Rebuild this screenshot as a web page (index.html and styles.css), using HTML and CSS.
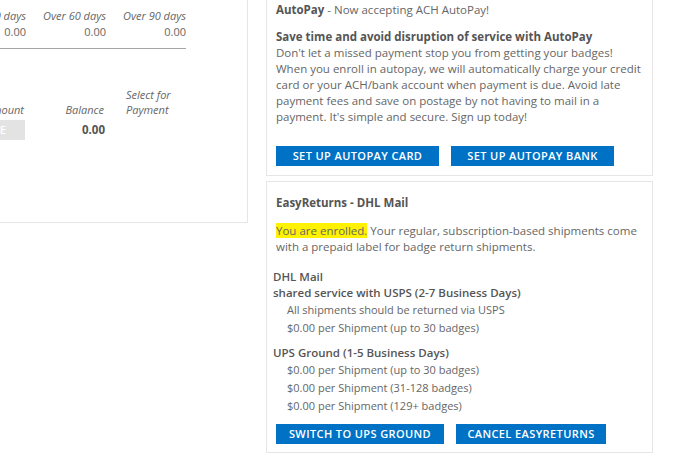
FILE: index.html
```html
<!DOCTYPE html>
<html lang="en">
<head>
<meta charset="utf-8">
<title>Billing</title>
<link rel="stylesheet" href="styles.css">
</head>
<body>
<div class="page">
  <div class="left-panel">
    <div class="aging">
      <div class="hd">Current</div>
      <div class="hd">Over 30 days</div>
      <div class="hd">Over 60 days</div>
      <div class="hd">Over 90 days</div>
      <div class="val">0.00</div>
      <div class="val">0.00</div>
      <div class="val">0.00</div>
      <div class="val">0.00</div>
    </div>
    <div class="invoices">
      <div class="hd">Amount</div>
      <div class="hd">Balance</div>
      <div class="hd sel">Select for<br>Payment</div>
      <div class="cell"><span class="btn-disabled">PAY ONLINE</span></div>
      <div class="cell bal">0.00</div>
      <div class="cell sel"></div>
    </div>
  </div>

  <div class="right-col">
    <section class="card card-autopay">
      <p class="lead"><b>AutoPay</b> - Now accepting ACH AutoPay!</p>
      <h4 class="card-sub">Save time and avoid disruption of service with AutoPay</h4>
      <p class="body">Don't let a missed payment stop you from getting your badges!<br>When you enroll in autopay, we will automatically charge your credit<br>card or your ACH/bank account when payment is due. Avoid late<br>payment fees and save on postage by not having to mail in a<br>payment. It's simple and secure. Sign up today!</p>
      <div class="btn-row btn-row-autopay">
        <button class="btn btn-autopay">Set up AutoPay Card</button>
        <button class="btn btn-autopay">Set up AutoPay Bank</button>
      </div>
    </section>

    <section class="card card-returns">
      <h4 class="card-title">EasyReturns - DHL Mail</h4>
      <p class="body"><mark class="hl">You are enrolled.</mark> Your regular, subscription-based shipments come<br>with a prepaid label for badge return shipments.</p>
      <div class="carrier">
        <div class="carrier-name">DHL Mail<br>shared service with USPS (2-7 Business Days)</div>
        <ul class="rates">
          <li>All shipments should be returned via USPS</li>
          <li>$0.00 per Shipment (up to 30 badges)</li>
        </ul>
      </div>
      <div class="carrier carrier-ups">
        <div class="carrier-name">UPS Ground (1-5 Business Days)</div>
        <ul class="rates">
          <li>$0.00 per Shipment (up to 30 badges)</li>
          <li>$0.00 per Shipment (31-128 badges)</li>
          <li>$0.00 per Shipment (129+ badges)</li>
        </ul>
      </div>
      <div class="btn-row btn-row-returns">
        <button class="btn btn-switch">Switch to UPS Ground</button>
        <button class="btn btn-cancel">Cancel EasyReturns</button>
      </div>
    </section>
  </div>
</div>
</body>
</html>
```

FILE: styles.css
```css
* { box-sizing: border-box; }

body {
  margin: 0;
  font-family: "Open Sans", "Segoe UI", sans-serif;
  font-size: 11.5px;
  line-height: 16px;
  color: #666;
  background: #fff;
  overflow: hidden;
}

.page {
  display: flex;
  align-items: flex-start;
  gap: 18px;
  margin: -10px 0 0 -300px;
}

/* left panel */
.left-panel {
  width: 548px;
  height: 233px;
  border: 1px solid #e6e6e6;
  padding: 17px 61px 0 16px;
  display: flex;
  flex-direction: column;
  align-items: flex-end;
}

.aging {
  display: grid;
  grid-template-columns: repeat(4, 80px);
  border-bottom: 1px solid #a6a6a6;
  padding-bottom: 8px;
}

.aging .hd,
.invoices .hd {
  font-style: italic;
  text-align: right;
  font-size: 11px;
}

.aging .val {
  text-align: right;
  font-size: 11px;
}

.invoices {
  margin-top: 38px;
  display: grid;
  grid-template-columns: 80px 80px 80px;
  align-items: end;
  row-gap: 3px;
}

.invoices .hd {
  line-height: 15px;
  padding-right: 2px;
}

.invoices .hd.sel {
  text-align: left;
  padding-left: 20px;
}

.invoices .cell {
  text-align: right;
  height: 20px;
  display: flex;
  align-items: center;
  justify-content: flex-end;
  padding-right: 1px;
}

.invoices .cell.bal {
  font-weight: 700;
  color: #555;
  font-size: 11.5px;
}

.btn-disabled {
  display: inline-block;
  height: 20px;
  line-height: 20px;
  padding: 0 19px;
  background: #e3e3e3;
  color: #fff;
  font-size: 11px;
  font-weight: 600;
  white-space: nowrap;
}

/* right column */
.right-col {
  width: 387px;
  display: flex;
  flex-direction: column;
  gap: 5px;
}

.card {
  border: 1px solid #e6e6e6;
  padding: 11px 9px 9px;
}

.card p,
.card h4,
.card ul {
  margin: 0;
}

.lead b {
  font-weight: 700;
  color: #555;
}

.card-sub,
.card-title {
  font-size: 11.5px;
  font-weight: 700;
  color: #555;
}

.card-sub {
  margin-top: 11px !important;
}

.body {
  white-space: nowrap;
}

.btn-row {
  display: flex;
  gap: 12px;
}

.btn-row-autopay {
  margin-top: 21px;
}

.btn {
  height: 20px;
  border: 0;
  padding: 0;
  background: #0072c6;
  color: #fff;
  font-family: "Open Sans", "Segoe UI", sans-serif;
  font-size: 11px;
  font-weight: 600;
  letter-spacing: 0.4px;
  text-transform: uppercase;
  line-height: 20px;
  text-align: center;
  white-space: nowrap;
  cursor: pointer;
}

.btn-autopay { width: 163px; }
.btn-switch { width: 168px; }
.btn-cancel { width: 150px; }

.card-returns {
  padding-top: 13px;
  padding-bottom: 8px;
}

.card-returns .body {
  margin-top: 12px;
}

.hl {
  background: #fff200;
  color: inherit;
}

.carrier {
  margin-left: -3px;
  margin-top: 14px;
}

.carrier-ups {
  margin-top: 8px;
}

.carrier-name {
  font-weight: 600;
  color: #555;
}

.rates {
  list-style: none;
  padding: 0 0 0 14px;
  font-size: 11px;
  line-height: 18px;
}

.btn-row-returns {
  margin-top: 9px;
}
```
